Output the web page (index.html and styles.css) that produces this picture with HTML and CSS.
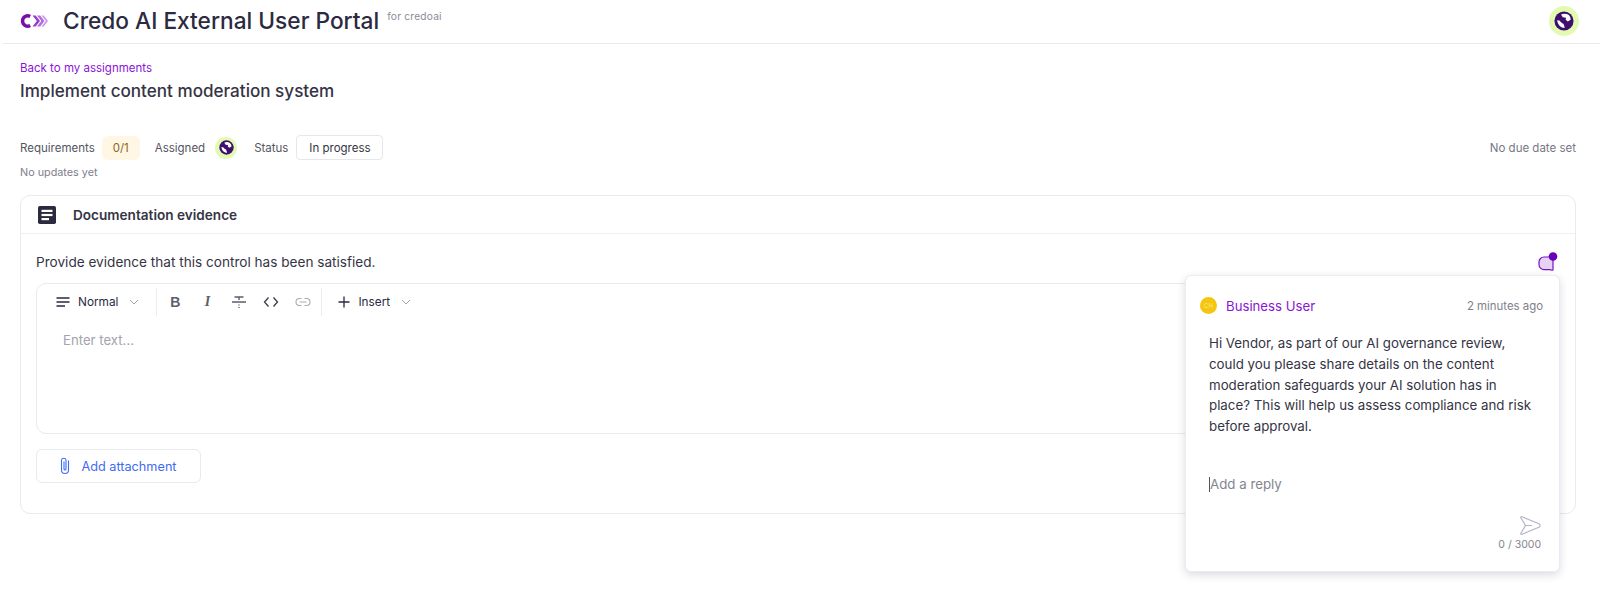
FILE: index.html
```html
<!DOCTYPE html>
<html lang="en">
<head>
  <meta charset="UTF-8" />
  <title>Credo AI External User Portal</title>
  <link rel="stylesheet" href="styles.css">
</head>
<body>
  <svg class="icon-defs" width="0" height="0">
    <symbol id="globe" viewBox="0 0 24 24">
      <circle cx="12" cy="12" r="11.5" fill="#3f0f6e"/>
      <path d="M8.5 4.2 C11 3 15 3 17.5 4.6 C19 6 20 8 20 10.5 L16.5 12.5 L14 10.5 L14.5 8 L10.5 7.5 Z" fill="#fff"/>
      <path d="M3.8 11 L6.5 11.5 L9 14 L11.5 15.5 L13 20.2 C9 20.5 4.5 17 3.8 11 Z" fill="#fff"/>
    </symbol>
  </svg>

  <!-- Top bar -->
  <header class="topbar">
    <div class="brand">
      <svg class="logo" viewBox="0 0 28 18" width="28" height="18">
        <path d="M10.2 4.4 A5.2 5.2 0 1 0 10.2 13.6" fill="none" stroke="#7a0fa8" stroke-width="3.4"/>
        <path d="M21.5 3.5 L25.8 9 L21.5 14.5 L23.8 14.5 L28 9 L23.8 3.5 Z" fill="#c99be9"/>
        <path d="M17 3.5 L21.3 9 L17 14.5 L20.2 14.5 L24.5 9 L20.2 3.5 Z" fill="#b36ede"/>
        <path d="M12.5 3.5 L16.8 9 L12.5 14.5 L15.7 14.5 L20 9 L15.7 3.5 Z" fill="#9a3fcb"/>
      </svg>
      <h1 class="portal-title">Credo AI External User Portal</h1>
      <span class="portal-for">for credoai</span>
    </div>
    <div class="avatar avatar-lg"><svg width="20" height="20"><use href="#globe"/></svg></div>
  </header>

  <main class="page">
    <a class="back-link" href="#">Back to my assignments</a>
    <h2 class="task-title">Implement content moderation system</h2>

    <div class="meta-row">
      <span class="meta-label">Requirements</span>
      <span class="count-badge">0/1</span>
      <span class="meta-label meta-assigned">Assigned</span>
      <div class="avatar avatar-sm"><svg width="15" height="15"><use href="#globe"/></svg></div>
      <span class="meta-label meta-status">Status</span>
      <span class="status-pill">In progress</span>
      <span class="due-date">No due date set</span>
    </div>
    <p class="updates">No updates yet</p>

    <section class="card">
      <div class="card-head">
        <svg class="doc-icon" viewBox="0 0 18 18" width="18" height="18">
          <rect width="18" height="18" rx="1.8" fill="#2b2a3f"/>
          <rect x="3.5" y="3.8" width="11" height="2.2" fill="#fff"/>
          <rect x="3.5" y="7.9" width="11" height="2.2" fill="#fff"/>
          <rect x="3.5" y="12" width="7.5" height="2.2" fill="#fff"/>
        </svg>
        <h3 class="card-title">Documentation evidence</h3>
      </div>

      <div class="card-body">
        <div class="prompt-row">
          <p class="prompt">Provide evidence that this control has been satisfied.</p>
          <span class="comment-flag">
            <svg viewBox="0 0 20 20" width="20" height="20">
              <path d="M6 5 H11 A5 5 0 0 1 15 8 V17.5 Q15 18.5 14 18.2 L12 17.6 H6 A5 5 0 0 1 1 12.6 V10 A5 5 0 0 1 6 5 Z" fill="#e6d2f5" stroke="#7a0fc4" stroke-width="1.2"/>
              <circle cx="15" cy="4.5" r="4.3" fill="#6a00b8"/>
            </svg>
          </span>
        </div>

        <div class="editor">
          <div class="toolbar">
            <div class="tool-group tool-group-first">
              <svg class="tool" viewBox="0 0 16 16" width="16" height="16"><path d="M1.5 4 H14.5 M1.5 8 H14.5 M1.5 12 H10" stroke="#2b2a3f" stroke-width="1.3" fill="none"/></svg>
              <span class="tool-text">Normal</span>
              <svg class="chev" viewBox="0 0 10 6" width="10" height="6"><path d="M1 1 L5 5 L9 1" stroke="#a5a5b2" stroke-width="1" fill="none"/></svg>
            </div>
            <div class="tool-group tool-group-format">
              <span class="fmt fmt-bold">B</span>
              <span class="fmt fmt-italic">I</span>
              <svg class="tool" viewBox="0 0 16 16" width="16" height="16"><path d="M1 8 H15 M3.5 3 H12.5 M8 3 V6 M8 10.5 V11.5 M8 13 V14" stroke="#5d5d6c" stroke-width="1.4" fill="none"/></svg>
              <svg class="tool" viewBox="0 0 16 16" width="16" height="16"><path d="M5.5 3.5 L1.5 8 L5.5 12.5 M10.5 3.5 L14.5 8 L10.5 12.5" stroke="#3b3a4c" stroke-width="1.3" fill="none"/></svg>
              <svg class="tool" viewBox="0 0 16 16" width="16" height="16"><path d="M6.5 4.5 H4.5 A3.5 3.5 0 0 0 4.5 11.5 H6.5 M9.5 4.5 H11.5 A3.5 3.5 0 0 1 11.5 11.5 H9.5 M4.5 8 H11.5" stroke="#a9a9b6" stroke-width="1.1" fill="none"/></svg>
            </div>
            <div class="tool-group tool-group-insert">
              <svg class="tool" viewBox="0 0 14 14" width="14" height="14"><path d="M7 1.5 V12.5 M1.5 7 H12.5" stroke="#2b2a3f" stroke-width="1.3" fill="none"/></svg>
              <span class="tool-text">Insert</span>
              <svg class="chev" viewBox="0 0 10 6" width="10" height="6"><path d="M1 1 L5 5 L9 1" stroke="#a5a5b2" stroke-width="1" fill="none"/></svg>
            </div>
          </div>
          <div class="editor-input">Enter text...</div>
        </div>

        <button class="attach-btn">
          <svg viewBox="0 0 14 20" width="14" height="20"><path d="M10.5 5 V14.5 A3.5 3.5 0 0 1 3.5 14.5 V4.5 A2.3 2.3 0 0 1 8 4.5 V13.5 A1 1 0 0 1 6 13.5 V6" transform="translate(0 -0.5)" stroke="#3f6bf0" stroke-width="1.1" fill="none"/></svg>
          <span>Add attachment</span>
        </button>
      </div>
    </section>
  </main>

  <!-- Comment popover -->
  <aside class="comment-pop">
    <div class="comment-head">
      <span class="initials">CH</span>
      <span class="comment-author">Business User</span>
      <span class="comment-time">2 minutes ago</span>
    </div>
    <p class="comment-text">Hi Vendor, as part of our AI governance review, could you please share details on the content moderation safeguards your AI solution has in place? This will help us assess compliance and risk before approval.</p>
    <div class="reply"><span class="caret"></span>Add a reply</div>
    <div class="reply-foot">
      <svg viewBox="0 0 22 21" width="22" height="21"><path d="M2.5 1.5 L20.5 9 Q21.5 10.5 20.5 12 L2.5 19.5 Q1.5 19.5 2 18 L6.5 10.5 L2 3 Q1.5 1.5 2.5 1.5 Z M6.5 10.5 H13" stroke="#b4b4c6" stroke-width="1.2" stroke-linejoin="round" fill="none"/></svg>
      <span class="reply-count">0 / 3000</span>
    </div>
  </aside>
</body>
</html>
```

FILE: styles.css
```css
* {
  margin: 0;
  padding: 0;
  box-sizing: border-box;
}

html, body {
  height: 100%;
  overflow: hidden;
  background: #fff;
  font-family: Inter, "Liberation Sans", sans-serif;
  color: #2b2a3f;
}

.icon-defs {
  position: absolute;
}

/* Top bar */
.topbar {
  height: 44px;
  margin-left: 3px;
  padding: 0 21px 2px 17px;
  display: flex;
  align-items: center;
  justify-content: space-between;
  border-bottom: 1px solid #e9e9ee;
}

.brand {
  display: flex;
  align-items: center;
}

.logo {
  margin-right: 15px;
}

.portal-title {
  font-size: 22.7px;
  font-weight: 500;
  line-height: 40px;
}

.portal-for {
  align-self: flex-start;
  margin: 9px 0 0 8px;
  font-size: 10.2px;
  color: #8c8c98;
  letter-spacing: 0.2px;
}

.avatar {
  display: flex;
  align-items: center;
  justify-content: center;
  border-radius: 50%;
  background: #e2fbb0;
}

.avatar-lg {
  width: 30px;
  height: 30px;
}

.avatar-sm {
  width: 22px;
  height: 22px;
}

/* Page */
.page {
  padding: 17px 24px 0 20px;
}

.back-link {
  display: block;
  font-size: 11.5px;
  line-height: 14px;
  color: #8a14d6;
  text-decoration: none;
}

.task-title {
  margin-top: 4px;
  font-size: 17.1px;
  font-weight: 500;
  line-height: 24px;
  color: #353444;
}

.meta-row {
  margin-top: 32px;
  display: flex;
  align-items: center;
  font-size: 11.5px;
  color: #55555f;
}

.count-badge {
  margin-left: 7px;
  width: 38px;
  height: 24px;
  display: flex;
  align-items: center;
  justify-content: center;
  border-radius: 6px;
  background: #fff6e3;
  color: #8a6a1f;
}

.meta-assigned {
  margin: 0 10px 0 15px;
}

.meta-status {
  margin: 0 8px 0 17px;
}

.status-pill {
  width: 87px;
  height: 25px;
  display: flex;
  align-items: center;
  justify-content: center;
  border: 1px solid #e6e6ee;
  border-radius: 4px;
  color: #353444;
}

.due-date {
  margin-left: auto;
  color: #777784;
}

.updates {
  margin-top: 5px;
  font-size: 10.8px;
  line-height: 15px;
  color: #80808c;
}

/* Card */
.card {
  margin-top: 15px;
  height: 319px;
  border: 1px solid #e9e9f0;
  border-radius: 10px;
}

.card-head {
  height: 38px;
  padding-left: 17px;
  display: flex;
  align-items: center;
  border-bottom: 1px solid #efeff3;
}

.card-title {
  margin-left: 17px;
  font-size: 13.6px;
  font-weight: 600;
  color: #353444;
}

.card-body {
  padding: 0 15px;
}

.prompt-row {
  height: 49px;
  display: flex;
  align-items: center;
  justify-content: space-between;
}

.prompt {
  margin-top: 7px;
  font-size: 13.6px;
  color: #353444;
}

.comment-flag {
  display: flex;
  margin: 6px 2px 0 0;
}

.editor {
  height: 151px;
  border: 1px solid #e9e9f0;
  border-radius: 10px;
}

.toolbar {
  height: 36px;
  padding: 4px 0 4px 18px;
  display: flex;
  align-items: stretch;
}

.tool-group {
  display: flex;
  align-items: center;
}

.tool-group-first {
  padding-right: 17px;
  border-right: 1px solid #ececf1;
}

.tool-group-format {
  padding: 0 10px;
  gap: 16px;
  border-right: 1px solid #ececf1;
}

.tool-group-insert {
  padding-left: 15px;
}

.tool-text {
  margin: 0 11px 0 7px;
  font-size: 11.8px;
  color: #2b2a3f;
}

.fmt {
  width: 16px;
  text-align: center;
  font-size: 14px;
  color: #5d5d6c;
  font-family: "Liberation Sans", sans-serif;
}

.fmt-bold {
  font-weight: 700;
}

.fmt-italic {
  font-family: "Liberation Serif", serif;
  font-weight: 700;
  font-style: italic;
}

.editor-input {
  margin-top: 12px;
  padding-left: 26px;
  font-size: 13.2px;
  color: #a3a3ae;
}

.attach-btn {
  margin-top: 15px;
  width: 165px;
  height: 34px;
  display: flex;
  align-items: center;
  justify-content: center;
  gap: 9px;
  padding-right: 2px;
  background: #fff;
  border: 1px solid #e9e9f0;
  border-radius: 6px;
  font-family: inherit;
  font-size: 12.7px;
  color: #3f6bf0;
}

/* Comment popover, sits over the card */
.comment-pop {
  position: absolute;
  left: 1185px;
  top: 275px;
  width: 375px;
  height: 297px;
  padding: 21px 16px 0 14px;
  background: #fff;
  border: 1px solid #ebebf1;
  border-radius: 6px;
  box-shadow: 0 3px 8px rgba(40, 40, 70, 0.16);
}

.comment-head {
  display: flex;
  align-items: center;
}

.initials {
  width: 17px;
  height: 17px;
  display: flex;
  align-items: center;
  justify-content: center;
  border-radius: 50%;
  background: #f5c60f;
  color: #fbe68e;
  font-size: 6px;
}

.comment-author {
  margin-left: 9px;
  font-size: 13.2px;
  color: #8a14d6;
}

.comment-time {
  margin-left: auto;
  font-size: 11.4px;
  color: #80808c;
}

.comment-text {
  margin: 19px 0 0 9px;
  width: 330px;
  font-size: 13.3px;
  line-height: 20.8px;
  color: #353444;
}

.reply {
  margin: 39px 0 0 9px;
  font-size: 13.3px;
  color: #85858f;
}

.caret {
  display: inline-block;
  width: 1px;
  height: 15px;
  vertical-align: -3px;
  background: #555;
}

.reply-foot {
  margin-top: 23px;
  display: flex;
  flex-direction: column;
  align-items: flex-end;
  padding-right: 2px;
}

.reply-count {
  margin-top: 2px;
  font-size: 10.5px;
  color: #85858f;
}
```
